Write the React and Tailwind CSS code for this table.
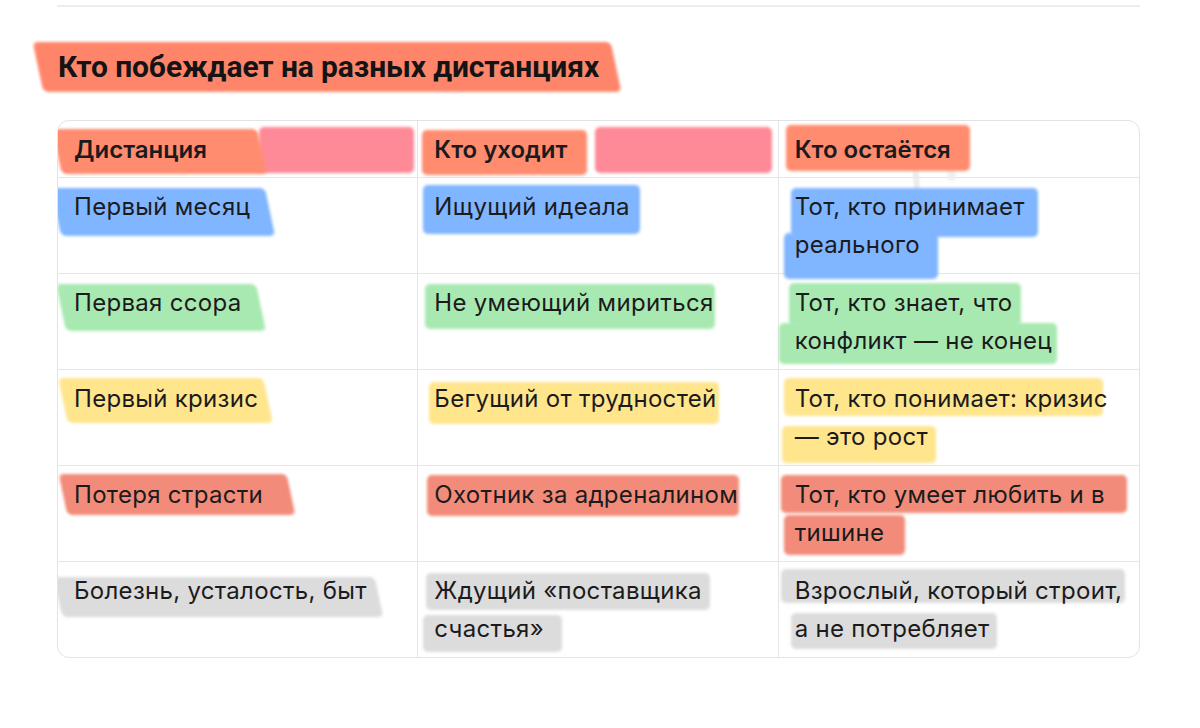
import React from 'react';

const C = {
  head: 'bg-[#ff8c6f]',
  pink: 'bg-[#ff8a97]',
  blue: 'bg-[#80b5ff]',
  green: 'bg-[#a8e9b1]',
  yellow: 'bg-[#ffe58c]',
  red: 'bg-[#f28b79]',
  gray: 'bg-[#dcdcdc]',
};

// each line: [text, leftExt, rightExt, top, height, skew]
const header = [
  { c: C.head, bold: true, lines: [['Дистанция', 17, 55, -2, 45, true]], pink: [201, 155] },
  { c: C.head, bold: true, lines: [['Кто уходит', 12, 20, -1, 45, false]], pink: [177, 177] },
  { c: C.head, bold: true, lines: [['Кто остаётся', 9, 19, -6, 46, false]], streaks: true },
];

const rows = [
  [
    { c: C.blue, lines: [['Первый месяц', 18, 20, 0, 48, true]] },
    { c: C.blue, lines: [['Ищущий идеала', 11, 10, -3, 49, false]] },
    {
      c: C.blue,
      lines: [
        ['Тот, кто принимает', 4, 13, 0, 49, false],
        ['реального', 11, 18, 7, 46, false],
      ],
    },
  ],
  [
    { c: C.green, lines: [['Первая ссора', 13, 20, 0, 47, true]] },
    { c: C.green, lines: [['Не умеющий мириться', 9, 1, 0, 45, false]] },
    {
      c: C.green,
      lines: [
        ['Тот, кто знает, что', 6, 8, -1, 43, false],
        ['конфликт — не конец', 16, 5, 1, 41, false],
      ],
    },
  ],
  [
    { c: C.yellow, lines: [['Первый кризис', 11, 10, -2, 45, true]] },
    { c: C.yellow, lines: [['Бегущий от трудностей', 5, 2, 2, 42, false]] },
    {
      c: C.yellow,
      lines: [
        ['Тот, кто понимает: кризис', 11, -5, -2, 38, false],
        ['— это рост', 13, 8, 8, 37, false],
      ],
    },
  ],
  [
    { c: C.red, lines: [['Потеря страсти', 11, 28, -2, 41, true]] },
    { c: C.red, lines: [['Охотник за адреналином', 7, 1, -1, 41, false]] },
    {
      c: C.red,
      lines: [
        ['Тот, кто умеет любить и в', 14, 22, -1, 38, false],
        ['тишине', 11, 21, 1, 40, false],
      ],
    },
  ],
  [
    { c: C.gray, lines: [['Болезнь, усталость, быт', 16, 12, 5, 40, true]] },
    {
      c: C.gray,
      lines: [
        ['Ждущий «поставщика', 8, 8, 1, 37, false],
        ['счастья»', 11, 18, 5, 37, false],
      ],
    },
    {
      c: C.gray,
      lines: [
        ['Взрослый, который строит,', 14, 3, -3, 34, false],
        ['а не потребляет', 4, 7, 3, 36, false],
      ],
    },
  ],
];

function Line({ c, line, bold }) {
  const [text, l, r, t, h, skew] = line;
  return (
    <div className="h-[38px] leading-[38px] whitespace-nowrap">
      <span className="relative inline-block">
        <span
          className={`absolute rounded-[5px] blur-[1.5px] ${c} ${skew ? 'skew-x-12' : ''}`}
          style={{ left: -l, right: -r, top: t, height: h }}
        />
        <span className={`relative ${bold ? 'font-semibold tracking-[0px]' : ''}`}>{text}</span>
      </span>
    </div>
  );
}

function Cell({ cell, last, head }) {
  return (
    <div
      className={`relative px-4 pt-[10px] ${head ? 'pb-[8px]' : 'pb-[9px]'} ${
        last ? '' : 'border-r border-[#e6e6e6]'
      }`}
    >
      {cell.pink && (
        <span
          className={`absolute top-[6px] h-[46px] rounded-[5px] blur-[1.5px] ${C.pink}`}
          style={{ left: cell.pink[0], width: cell.pink[1] }}
        />
      )}
      {cell.streaks && (
        <>
          <span className="absolute left-[134px] top-[40px] h-[30px] w-[6px] rotate-[-4deg] rounded-full bg-[#ececec] blur-[1px]" />
          <span className="absolute left-[168px] top-[38px] h-[22px] w-[8px] rotate-[-6deg] rounded-full bg-[#efefef] blur-[1px]" />
        </>
      )}
      {cell.lines.map((ln, i) => (
        <Line key={i} c={cell.c} line={ln} bold={cell.bold} />
      ))}
    </div>
  );
}

export default function App() {
  return (
    <div
      className="min-h-screen bg-white text-[#1b1b1d]"
      style={{ fontFamily: 'Inter, "Noto Sans", sans-serif' }}
    >
      <div className="ml-[57px] w-[1083px]">
        <div className="pt-[5px]">
          <div className="h-[2px] bg-[#ededed]" />
        </div>

        {/* Title */}
        <div className="mt-[35px] h-[50px] leading-[50px] whitespace-nowrap">
          <span className="relative ml-[1px] inline-block">
            <span className="absolute -left-[20px] -right-[17px] top-0 h-[50px] skew-x-12 rounded-[5px] bg-[#ff856a] blur-[1.5px]" />
            <span
              className="relative text-[30px] font-bold tracking-[-0.1px] text-[#141414]"
              style={{ fontFamily: 'Roboto, "Noto Sans", sans-serif' }}
            >
              Кто побеждает на разных дистанциях
            </span>
          </span>
        </div>

        {/* Table */}
        <div className="mt-[28px] overflow-hidden rounded-xl border border-[#e3e3e3] text-[24px] tracking-[0.3px]">
          <div className="grid grid-cols-3 border-b border-[#e6e6e6]">
            {header.map((cell, i) => (
              <Cell key={i} cell={cell} last={i === 2} head />
            ))}
          </div>
          {rows.map((row, ri) => (
            <div
              key={ri}
              className={`grid grid-cols-3 ${ri < rows.length - 1 ? 'border-b border-[#e6e6e6]' : ''}`}
            >
              {row.map((cell, i) => (
                <Cell key={i} cell={cell} last={i === 2} />
              ))}
            </div>
          ))}
        </div>
      </div>
    </div>
  );
}
